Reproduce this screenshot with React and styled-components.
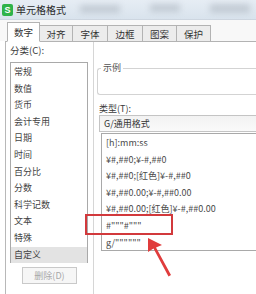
import React from "react";
import styled, { createGlobalStyle } from "styled-components";

const Global = createGlobalStyle`
  html, body { margin: 0; padding: 0; background: #fff; }
  body { font-family: "Noto Sans CJK SC", "Noto Sans", sans-serif; }
`;

const Win = styled.div`
  position: relative;
  width: 256px;
  height: 294px;
  overflow: hidden;
  background: #fff;
  display: flex;
  flex-direction: column;
  font-size: 9px;
  color: #444;
`;

const TitleBar = styled.div`
  height: 19px;
  flex: none;
  display: flex;
  align-items: center;
  gap: 3px;
  padding-left: 2px;
  background: linear-gradient(#e6edf4, #d9e3ed);
  border-bottom: 1px solid #cdd6e0;
  position: relative;
`;

const AppIcon = styled.div`
  width: 11px;
  height: 12px;
  border-radius: 2px;
  background: #2fb34a;
  color: #fff;
  font: bold 9px "Liberation Sans", sans-serif;
  display: flex;
  align-items: center;
  justify-content: center;
`;

const Title = styled.span`
  font-size: 10px;
  color: #2a2a2a;
`;

const Blur = styled.div`
  position: absolute;
  top: ${(p) => p.$t}px;
  left: ${(p) => p.$l}px;
  width: ${(p) => p.$w}px;
  height: ${(p) => p.$h}px;
  background: #aab3bd;
  filter: blur(3px);
  opacity: 0.55;
`;

const TabStrip = styled.div`
  flex: none;
  display: flex;
  align-items: flex-end;
  height: 21px;
  padding-left: 7px;
  background: #f8f8f8;
  position: relative;
  z-index: 1;
`;

const Tab = styled.div`
  width: ${(p) => p.$w}px;
  height: ${(p) => (p.$active ? 20 : 17)}px;
  box-sizing: border-box;
  display: flex;
  align-items: center;
  justify-content: center;
  background: ${(p) => (p.$active ? "#fff" : "#ececec")};
  border: 1px solid #b3b3b3;
  border-left-width: ${(p) => (p.$first ? 1 : 0)}px;
  border-bottom: ${(p) => (p.$active ? "1px solid #fff" : "1px solid #b3b3b3")};
  margin-bottom: -1px;
  font-size: 9.5px;
  color: #333;
`;

const Panel = styled.div`
  flex: 1;
  margin-left: 5px;
  border-left: 1px solid #b8b8b8;
  border-top: 1px solid #b3b3b3;
  background: #fff;
  display: flex;
`;

const LeftCol = styled.div`
  width: 83px;
  flex: none;
  display: flex;
  flex-direction: column;
  padding: 1px 0 0 4px;
  border-right: 1px solid #d6d6d6;
`;

const Label = styled.div`
  height: 15px;
  line-height: 15px;
  font-size: 9.5px;
  color: #3a3a3a;
`;

const CatList = styled.div`
  margin-top: 4px;
  width: 78px;
  height: 201px;
  box-sizing: border-box;
  border: 1px solid #a9a9a9;
  display: flex;
  flex-direction: column;
  padding-top: 1px;
`;

const CatItem = styled.div`
  height: 16.6px;
  line-height: 16.6px;
  padding-left: 3px;
  font-size: 9px;
  color: #444;
  background: ${(p) => (p.$sel ? "#e3e3e3" : "transparent")};
`;

const DelButton = styled.div`
  margin: 4px 0 0 12px;
  width: 55px;
  height: 17px;
  box-sizing: border-box;
  border: 1px solid #c9c9c9;
  background: #f6f6f6;
  color: #a8a8a8;
  font-size: 9px;
  display: flex;
  align-items: center;
  justify-content: center;
`;

const RightCol = styled.div`
  flex: 1;
  display: flex;
  flex-direction: column;
  padding: 21px 0 0 3px;
`;

const GroupBox = styled.fieldset`
  margin: 0;
  height: 32px;
  box-sizing: border-box;
  border: 1px solid #d3d3d3;
  border-right: none;
  border-radius: 3px 0 0 3px;
  padding: 0;
  legend {
    margin-left: 3px;
    padding: 0 2px;
    font-size: 9px;
    color: #555;
    line-height: 10px;
  }
`;

const TypeLabel = styled(Label)`
  margin-top: 7px;
  margin-left: 2px;
  height: 13px;
  line-height: 13px;
  font-size: 9px;
`;

const Input = styled.div`
  margin-left: 2px;
  height: 17px;
  box-sizing: border-box;
  border: 1px solid #c4c4c4;
  border-right: none;
  padding-left: 4px;
  line-height: 15px;
  font-size: 9px;
  color: #333;
  background: linear-gradient(#f2f2f2, #fafafa);
`;

const FmtList = styled.div`
  margin: 1px 0 0 4px;
  height: 118px;
  box-sizing: border-box;
  border: 1px solid #a9a9a9;
  border-right: none;
  padding-top: 1px;
  display: flex;
  flex-direction: column;
`;

const FmtItem = styled.div`
  height: 16.6px;
  line-height: 16.6px;
  padding-left: 4px;
  font-size: 9px;
  color: #4a4a4a;
  white-space: nowrap;
`;

const Mark = styled.div`
  position: absolute;
  left: 85px;
  top: 214px;
  width: 88px;
  height: 21px;
  box-sizing: border-box;
  border: 2px solid #d2393c;
`;

const Arrow = styled.svg`
  position: absolute;
  left: 140px;
  top: 232px;
`;

const cats = ["常规", "数值", "货币", "会计专用", "日期", "时间", "百分比", "分数", "科学记数", "文本", "特殊", "自定义"];
const fmts = [
  "[h]:mm:ss",
  "¥#,##0;¥-#,##0",
  "¥#,##0;[红色]¥-#,##0",
  "¥#,##0.00;¥-#,##0.00",
  "¥#,##0.00;[红色]¥-#,##0.00",
  '#"""#"""',
  'g/""""""',
];
const tabs = [
  ["数字", 33],
  ["对齐", 33],
  ["字体", 35],
  ["边框", 35],
  ["图案", 34],
  ["保护", 34],
];

export default function App() {
  return (
    <Win>
      <Global />
      <TitleBar>
        <AppIcon>S</AppIcon>
        <Title>单元格格式</Title>
        <Blur $t={5} $l={80} $w={40} $h={8} />
        <Blur $t={4} $l={150} $w={30} $h={8} />
        <Blur $t={4} $l={210} $w={40} $h={9} />
      </TitleBar>
      <TabStrip>
        {tabs.map(([t, w], i) => (
          <Tab key={t} $w={w} $active={i === 0} $first={i === 0}>
            {t}
          </Tab>
        ))}
      </TabStrip>
      <Panel>
        <LeftCol>
          <Label>分类(C):</Label>
          <CatList>
            {cats.map((c) => (
              <CatItem key={c} $sel={c === "自定义"}>
                {c}
              </CatItem>
            ))}
          </CatList>
          <DelButton>删除(D)</DelButton>
        </LeftCol>
        <RightCol>
          <GroupBox>
            <legend>示例</legend>
          </GroupBox>
          <TypeLabel>类型(T):</TypeLabel>
          <Input>G/通用格式</Input>
          <FmtList>
            {fmts.map((f) => (
              <FmtItem key={f}>{f}</FmtItem>
            ))}
          </FmtList>
        </RightCol>
      </Panel>
      <Mark />
      <Arrow width="40" height="50" viewBox="0 0 40 50">
        <polygon points="8,6 22,13 16,15.5 31,43 28.5,44.5 13.5,16.5 8,20" fill="#e03c3c" />
      </Arrow>
    </Win>
  );
}
